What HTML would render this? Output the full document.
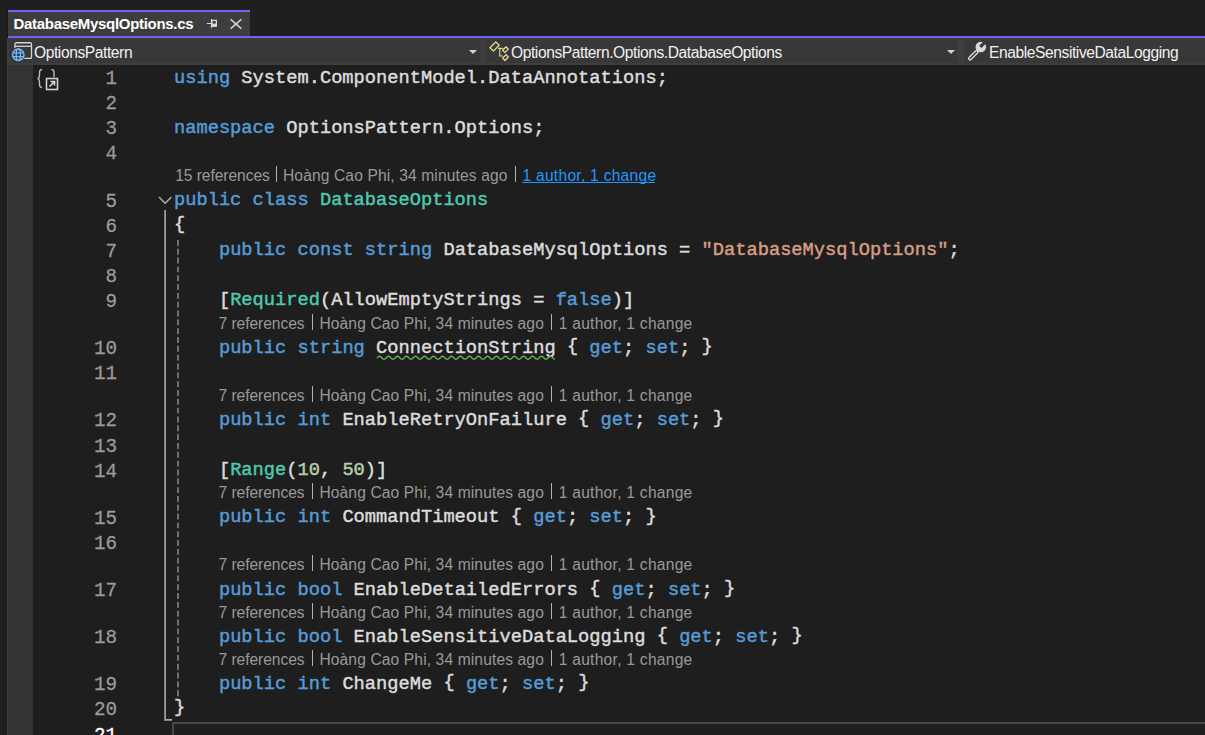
<!DOCTYPE html>
<html><head><meta charset="utf-8"><style>
html,body{margin:0;padding:0;}
body{width:1205px;height:735px;overflow:hidden;background:#1f1f1f;position:relative;font-family:"Liberation Sans",sans-serif;}
.abs{position:absolute;}
#tab{position:absolute;left:8px;top:10px;width:242px;height:26px;background:#3d3d3d;border-top:2px solid #7262e9;box-sizing:border-box;}
#tabtxt{position:absolute;left:13.5px;top:14px;font:bold 15px/20px "Liberation Sans",sans-serif;color:#fff;letter-spacing:-0.3px;white-space:nowrap}
#pl{position:absolute;left:8px;right:0;top:36px;height:2px;background:#7262e9}
#nav{position:absolute;left:7px;right:0;top:38px;height:27px;background:#3e3e3e} #tabedge{position:absolute;left:7px;top:10px;width:1px;height:28px;background:#191919} #gutedge{position:absolute;left:7px;top:65px;width:1px;bottom:0;background:#3d3d3d}
.dd{position:absolute;top:39px;height:24px;background:#383838}
.ddt{position:absolute;top:43px;font:15.6px/20px "Liberation Sans",sans-serif;color:#f0f0f0;white-space:nowrap;letter-spacing:-0.42px}
.arr{position:absolute;top:50px;width:0;height:0;border-left:4px solid transparent;border-right:4px solid transparent;border-top:4px solid #d4d4d4}
#gut{position:absolute;left:8px;top:65px;width:25px;bottom:0;background:#333333}
#ed{position:absolute;left:33px;top:65px;right:0;bottom:0;background:#1e1e1e}
.ln{position:absolute;left:60px;width:57px;text-align:right;font:19.2px/25px "Liberation Mono",monospace;white-space:pre;-webkit-text-stroke:0.25px currentColor;transform-origin:0 5px;transform:scaleY(1.04)}
.code{position:absolute;left:174px;font:18.72px/25px "Liberation Mono",monospace;color:#dcdcdc;white-space:pre;-webkit-text-stroke:0.45px currentColor}
.br{position:relative;top:-1.5px} .k{color:#569cd6} .y{color:#4ec9b0} .s{color:#d69d85} .n{color:#b5cea8}
.q{}
.cl{position:absolute;font:15.6px/20px "Liberation Sans",sans-serif;color:#999;white-space:pre}
.cl{margin-top:-4.68px}
.cl span{position:absolute;top:0} .sep{position:absolute;top:0px;width:1px;height:16px;background:#b2b2b2}
.lk{color:#1e98ff} #ul{position:absolute;left:522px;top:182px;width:133px;height:1px;background:#1e98ff}
#fold{position:absolute;left:165px;top:210px;width:1px;height:510px;background:#a5a5a5}
#foldb{position:absolute;left:165px;top:719px;width:7px;height:1px;background:#a5a5a5}
#guide{position:absolute;left:178px;top:240px;width:1px;height:456px;background:repeating-linear-gradient(to bottom,#777 0,#777 5.5px,transparent 5.5px,transparent 9.5px)}
#cur{position:absolute;left:172px;top:722px;right:-4px;height:40px;border:2px solid #464646;box-sizing:border-box}
</style></head><body>
<div id="tabedge"></div><div id="tab"></div>
<div id="tabtxt">DatabaseMysqlOptions.cs</div>
<svg class="abs" style="left:205px;top:17px" width="14" height="12" viewBox="0 0 14 12">
 <path d="M1.8 6.5H6.3M6.5 1.9V10.8" stroke="#d8d8d8" stroke-width="1.2" fill="none"/>
 <rect x="6.85" y="3.4" width="4.5" height="5.75" fill="none" stroke="#d8d8d8" stroke-width="1.3"/>
 <rect x="6.5" y="6.6" width="5.2" height="3" fill="#d8d8d8"/>
</svg>
<svg class="abs" style="left:229px;top:18px" width="14" height="12" viewBox="0 0 14 12">
 <path d="M1.6 1.4L12.4 10.6M12.4 1.4L1.6 10.6" stroke="#d8d8d8" stroke-width="1.4" fill="none"/>
</svg>
<div id="pl"></div>
<div id="nav"></div>
<div class="dd" style="left:9px;width:471px"></div>
<div class="dd" style="left:486px;width:471px"></div>
<div class="dd" style="left:964px;width:241px"></div>
<svg class="abs" style="left:10px;top:40px" width="24" height="22" viewBox="0 0 24 22">
 <rect x="5" y="2.75" width="16.5" height="15.7" rx="1.2" fill="none" stroke="#d4d4d4" stroke-width="1.3"/>
 <path d="M5 6.3H21.5" stroke="#d4d4d4" stroke-width="1.3"/>
 <circle cx="8.2" cy="14.6" r="7.4" fill="#383838"/>
 <circle cx="8.3" cy="14.7" r="5.7" fill="none" stroke="#74b8ff" stroke-width="1.5"/>
 <ellipse cx="8.3" cy="14.7" rx="2.1" ry="5.7" fill="none" stroke="#74b8ff" stroke-width="1.3"/>
 <path d="M2.8 12.9H13.6M2.8 16.5H13.6" stroke="#74b8ff" stroke-width="1.25"/>
</svg>
<div class="ddt" style="left:34px">OptionsPattern</div>
<div class="arr" style="left:469px"></div>
<svg class="abs" style="left:486px;top:38px" width="26" height="26" viewBox="0 0 26 26">
 <g fill="#423c30" stroke="#f2dc9a" stroke-width="1.25" stroke-linejoin="round">
  <rect x="-4.1" y="-2.4" width="8.2" height="4.8" transform="translate(8.6 8.5) rotate(-45)"/>
  <rect x="-2.45" y="-1.65" width="4.9" height="3.3" transform="translate(19.5 11.7) rotate(-45)"/>
  <rect x="-2.45" y="-1.65" width="4.9" height="3.3" transform="translate(19.5 19.6) rotate(-45)"/>
 </g>
 <path d="M12.2 10.4H16.8M13.8 10.4V18H16.8" stroke="#f2dc9a" stroke-width="1.1" fill="none"/>
</svg>
<div class="ddt" style="left:511px">OptionsPattern.Options.DatabaseOptions</div>
<div class="arr" style="left:947px"></div>
<svg class="abs" style="left:966px;top:40px" width="22" height="22" viewBox="0 0 22 22">
 <path d="M4 18.5L10.5 12" stroke="#d8d8d8" stroke-width="4.2" stroke-linecap="round"/>
 <path d="M4 18.5L10.5 12" stroke="#383838" stroke-width="1.4" stroke-linecap="round"/>
 <circle cx="14.8" cy="7" r="5.3" fill="#d8d8d8"/>
 <path d="M14.3 6.8L18.8 2.3" stroke="#383838" stroke-width="3.2" stroke-linecap="butt"/>
</svg>
<div class="ddt" style="left:989px">EnableSensitiveDataLogging</div>
<div id="gut"></div><div id="gutedge"></div>
<div id="ed"></div>
<svg class="abs" style="left:34px;top:66px" width="28" height="26" viewBox="0 0 28 26">
 <path d="M8 3.5C5.5 3.5 5.5 5 5.5 8.5C5.5 11 5 12.5 3.5 12.5C5 12.5 5.5 14 5.5 16.5C5.5 20 5.5 21.5 8 21.5" stroke="#bdbdbd" stroke-width="1.4" fill="none"/>
 <path d="M17.5 3.5C20 3.5 20 5 20 8.5V11" stroke="#bdbdbd" stroke-width="1.4" fill="none"/>
 <rect x="12.5" y="12.5" width="11" height="11" fill="#1e1e1e" stroke="#cfcfcf" stroke-width="1.6"/>
 <path d="M15.5 20.5L20.5 15.5M16.5 15.5H20.5V19.5" stroke="#dcdcdc" stroke-width="1.6" fill="none"/>
</svg>
<svg class="abs" style="left:158px;top:195px" width="15" height="10" viewBox="0 0 15 10">
 <path d="M1 2L7.2 8.3L13.4 2" stroke="#b0b0b0" stroke-width="1.4" fill="none"/>
</svg>
<svg class="abs" style="left:0;top:0" width="1205" height="735">
 <path d="M165.1 210V719.9H172" fill="none" stroke="#ababab" stroke-width="1.6"/>
 <line x1="178" y1="239.9" x2="178" y2="696.5" stroke="#6f6f6f" stroke-width="2" stroke-dasharray="5.9 2.93"/>
</svg>
<div id="cur"></div>
<div id="ul"></div>
<div class="ln" style="top:67.25px;color:#9b9b9b">1</div>
<div class="code" style="top:65.75px"><span class="k">using</span> System.ComponentModel.DataAnnotations;</div>
<div class="ln" style="top:92.33px;color:#9b9b9b">2</div>
<div class="ln" style="top:117.41px;color:#9b9b9b">3</div>
<div class="code" style="top:115.91px"><span class="k">namespace</span> OptionsPattern.Options;</div>
<div class="ln" style="top:142.49px;color:#9b9b9b">4</div>
<div class="ln" style="top:189.67px;color:#9b9b9b">5</div>
<div class="code" style="top:188.17px"><span class="k">public</span> <span class="k">class</span> <span class="y">DatabaseOptions</span></div>
<div class="cl" style="top:170.72px;left:175.2px"><span style="left:0px;letter-spacing:-0.06px">15 references</span><i class="sep" style="left:100.8px"></i><span style="left:107.8px;letter-spacing:0.12px">Hoàng Cao Phi, 34 minutes ago</span><i class="sep" style="left:339.6px"></i><span style="left:347.3px;letter-spacing:0.26px"><span class="lk">1 author, 1 change</span></span></div>
<div class="ln" style="top:214.75px;color:#9b9b9b">6</div>
<div class="code" style="top:213.25px"><span class="br">{</span></div>
<div class="ln" style="top:239.83px;color:#9b9b9b">7</div>
<div class="code" style="top:238.33px">    <span class="k">public</span> <span class="k">const</span> <span class="k">string</span> DatabaseMysqlOptions = <span class="s">&quot;DatabaseMysqlOptions&quot;</span>;</div>
<div class="ln" style="top:264.91px;color:#9b9b9b">8</div>
<div class="ln" style="top:289.99px;color:#9b9b9b">9</div>
<div class="code" style="top:288.49px">    [<span class="y">Required</span>(AllowEmptyStrings = <span class="k">false</span>)]</div>
<div class="ln" style="top:337.17px;color:#9b9b9b">10</div>
<div class="code" style="top:335.67px">    <span class="k">public</span> <span class="k">string</span> <span class="q">ConnectionString</span> <span class="br">{</span> <span class="k">get</span>; <span class="k">set</span>; <span class="br">}</span></div>
<div class="cl" style="top:318.22px;left:218.6px"><span style="left:0px;letter-spacing:-0.06px">7 references</span><i class="sep" style="left:93.3px"></i><span style="left:100.8px;letter-spacing:0.12px">Hoàng Cao Phi, 34 minutes ago</span><i class="sep" style="left:332.6px"></i><span style="left:340.1px;letter-spacing:0.26px">1 author, 1 change</span></div>
<div class="ln" style="top:362.25px;color:#9b9b9b">11</div>
<div class="ln" style="top:409.43px;color:#9b9b9b">12</div>
<div class="code" style="top:407.93px">    <span class="k">public</span> <span class="k">int</span> EnableRetryOnFailure <span class="br">{</span> <span class="k">get</span>; <span class="k">set</span>; <span class="br">}</span></div>
<div class="cl" style="top:390.48px;left:218.6px"><span style="left:0px;letter-spacing:-0.06px">7 references</span><i class="sep" style="left:93.3px"></i><span style="left:100.8px;letter-spacing:0.12px">Hoàng Cao Phi, 34 minutes ago</span><i class="sep" style="left:332.6px"></i><span style="left:340.1px;letter-spacing:0.26px">1 author, 1 change</span></div>
<div class="ln" style="top:434.51px;color:#9b9b9b">13</div>
<div class="ln" style="top:459.59px;color:#9b9b9b">14</div>
<div class="code" style="top:458.09px">    [<span class="y">Range</span>(<span class="n">10</span>, <span class="n">50</span>)]</div>
<div class="ln" style="top:506.77px;color:#9b9b9b">15</div>
<div class="code" style="top:505.27px">    <span class="k">public</span> <span class="k">int</span> CommandTimeout <span class="br">{</span> <span class="k">get</span>; <span class="k">set</span>; <span class="br">}</span></div>
<div class="cl" style="top:487.82px;left:218.6px"><span style="left:0px;letter-spacing:-0.06px">7 references</span><i class="sep" style="left:93.3px"></i><span style="left:100.8px;letter-spacing:0.12px">Hoàng Cao Phi, 34 minutes ago</span><i class="sep" style="left:332.6px"></i><span style="left:340.1px;letter-spacing:0.26px">1 author, 1 change</span></div>
<div class="ln" style="top:531.85px;color:#9b9b9b">16</div>
<div class="ln" style="top:579.03px;color:#9b9b9b">17</div>
<div class="code" style="top:577.53px">    <span class="k">public</span> <span class="k">bool</span> EnableDetailedErrors <span class="br">{</span> <span class="k">get</span>; <span class="k">set</span>; <span class="br">}</span></div>
<div class="cl" style="top:560.08px;left:218.6px"><span style="left:0px;letter-spacing:-0.06px">7 references</span><i class="sep" style="left:93.3px"></i><span style="left:100.8px;letter-spacing:0.12px">Hoàng Cao Phi, 34 minutes ago</span><i class="sep" style="left:332.6px"></i><span style="left:340.1px;letter-spacing:0.26px">1 author, 1 change</span></div>
<div class="ln" style="top:626.21px;color:#9b9b9b">18</div>
<div class="code" style="top:624.71px">    <span class="k">public</span> <span class="k">bool</span> EnableSensitiveDataLogging <span class="br">{</span> <span class="k">get</span>; <span class="k">set</span>; <span class="br">}</span></div>
<div class="cl" style="top:607.26px;left:218.6px"><span style="left:0px;letter-spacing:-0.06px">7 references</span><i class="sep" style="left:93.3px"></i><span style="left:100.8px;letter-spacing:0.12px">Hoàng Cao Phi, 34 minutes ago</span><i class="sep" style="left:332.6px"></i><span style="left:340.1px;letter-spacing:0.26px">1 author, 1 change</span></div>
<div class="ln" style="top:673.39px;color:#9b9b9b">19</div>
<div class="code" style="top:671.89px">    <span class="k">public</span> <span class="k">int</span> ChangeMe <span class="br">{</span> <span class="k">get</span>; <span class="k">set</span>; <span class="br">}</span></div>
<div class="cl" style="top:654.44px;left:218.6px"><span style="left:0px;letter-spacing:-0.06px">7 references</span><i class="sep" style="left:93.3px"></i><span style="left:100.8px;letter-spacing:0.12px">Hoàng Cao Phi, 34 minutes ago</span><i class="sep" style="left:332.6px"></i><span style="left:340.1px;letter-spacing:0.26px">1 author, 1 change</span></div>
<div class="ln" style="top:698.47px;color:#9b9b9b">20</div>
<div class="code" style="top:696.97px"><span class="br">}</span></div>
<div class="ln" style="top:723.55px;color:#fff">21</div>
<svg class="abs" style="left:0;top:0" width="1205" height="735"><polyline points="377.00,357.96 377.50,357.44 378.00,356.95 378.50,356.55 379.00,356.29 379.50,356.20 380.00,356.29 380.50,356.55 381.00,356.95 381.50,357.44 382.00,357.96 382.50,358.45 383.00,358.85 383.50,359.11 384.00,359.20 384.50,359.11 385.00,358.85 385.50,358.45 386.00,357.96 386.50,357.44 387.00,356.95 387.50,356.55 388.00,356.29 388.50,356.20 389.00,356.29 389.50,356.55 390.00,356.95 390.50,357.44 391.00,357.96 391.50,358.45 392.00,358.85 392.50,359.11 393.00,359.20 393.50,359.11 394.00,358.85 394.50,358.45 395.00,357.96 395.50,357.44 396.00,356.95 396.50,356.55 397.00,356.29 397.50,356.20 398.00,356.29 398.50,356.55 399.00,356.95 399.50,357.44 400.00,357.96 400.50,358.45 401.00,358.85 401.50,359.11 402.00,359.20 402.50,359.11 403.00,358.85 403.50,358.45 404.00,357.96 404.50,357.44 405.00,356.95 405.50,356.55 406.00,356.29 406.50,356.20 407.00,356.29 407.50,356.55 408.00,356.95 408.50,357.44 409.00,357.96 409.50,358.45 410.00,358.85 410.50,359.11 411.00,359.20 411.50,359.11 412.00,358.85 412.50,358.45 413.00,357.96 413.50,357.44 414.00,356.95 414.50,356.55 415.00,356.29 415.50,356.20 416.00,356.29 416.50,356.55 417.00,356.95 417.50,357.44 418.00,357.96 418.50,358.45 419.00,358.85 419.50,359.11 420.00,359.20 420.50,359.11 421.00,358.85 421.50,358.45 422.00,357.96 422.50,357.44 423.00,356.95 423.50,356.55 424.00,356.29 424.50,356.20 425.00,356.29 425.50,356.55 426.00,356.95 426.50,357.44 427.00,357.96 427.50,358.45 428.00,358.85 428.50,359.11 429.00,359.20 429.50,359.11 430.00,358.85 430.50,358.45 431.00,357.96 431.50,357.44 432.00,356.95 432.50,356.55 433.00,356.29 433.50,356.20 434.00,356.29 434.50,356.55 435.00,356.95 435.50,357.44 436.00,357.96 436.50,358.45 437.00,358.85 437.50,359.11 438.00,359.20 438.50,359.11 439.00,358.85 439.50,358.45 440.00,357.96 440.50,357.44 441.00,356.95 441.50,356.55 442.00,356.29 442.50,356.20 443.00,356.29 443.50,356.55 444.00,356.95 444.50,357.44 445.00,357.96 445.50,358.45 446.00,358.85 446.50,359.11 447.00,359.20 447.50,359.11 448.00,358.85 448.50,358.45 449.00,357.96 449.50,357.44 450.00,356.95 450.50,356.55 451.00,356.29 451.50,356.20 452.00,356.29 452.50,356.55 453.00,356.95 453.50,357.44 454.00,357.96 454.50,358.45 455.00,358.85 455.50,359.11 456.00,359.20 456.50,359.11 457.00,358.85 457.50,358.45 458.00,357.96 458.50,357.44 459.00,356.95 459.50,356.55 460.00,356.29 460.50,356.20 461.00,356.29 461.50,356.55 462.00,356.95 462.50,357.44 463.00,357.96 463.50,358.45 464.00,358.85 464.50,359.11 465.00,359.20 465.50,359.11 466.00,358.85 466.50,358.45 467.00,357.96 467.50,357.44 468.00,356.95 468.50,356.55 469.00,356.29 469.50,356.20 470.00,356.29 470.50,356.55 471.00,356.95 471.50,357.44 472.00,357.96 472.50,358.45 473.00,358.85 473.50,359.11 474.00,359.20 474.50,359.11 475.00,358.85 475.50,358.45 476.00,357.96 476.50,357.44 477.00,356.95 477.50,356.55 478.00,356.29 478.50,356.20 479.00,356.29 479.50,356.55 480.00,356.95 480.50,357.44 481.00,357.96 481.50,358.45 482.00,358.85 482.50,359.11 483.00,359.20 483.50,359.11 484.00,358.85 484.50,358.45 485.00,357.96 485.50,357.44 486.00,356.95 486.50,356.55 487.00,356.29 487.50,356.20 488.00,356.29 488.50,356.55 489.00,356.95 489.50,357.44 490.00,357.96 490.50,358.45 491.00,358.85 491.50,359.11 492.00,359.20 492.50,359.11 493.00,358.85 493.50,358.45 494.00,357.96 494.50,357.44 495.00,356.95 495.50,356.55 496.00,356.29 496.50,356.20 497.00,356.29 497.50,356.55 498.00,356.95 498.50,357.44 499.00,357.96 499.50,358.45 500.00,358.85 500.50,359.11 501.00,359.20 501.50,359.11 502.00,358.85 502.50,358.45 503.00,357.96 503.50,357.44 504.00,356.95 504.50,356.55 505.00,356.29 505.50,356.20 506.00,356.29 506.50,356.55 507.00,356.95 507.50,357.44 508.00,357.96 508.50,358.45 509.00,358.85 509.50,359.11 510.00,359.20 510.50,359.11 511.00,358.85 511.50,358.45 512.00,357.96 512.50,357.44 513.00,356.95 513.50,356.55 514.00,356.29 514.50,356.20 515.00,356.29 515.50,356.55 516.00,356.95 516.50,357.44 517.00,357.96 517.50,358.45 518.00,358.85 518.50,359.11 519.00,359.20 519.50,359.11 520.00,358.85 520.50,358.45 521.00,357.96 521.50,357.44 522.00,356.95 522.50,356.55 523.00,356.29 523.50,356.20 524.00,356.29 524.50,356.55 525.00,356.95 525.50,357.44 526.00,357.96 526.50,358.45 527.00,358.85 527.50,359.11 528.00,359.20 528.50,359.11 529.00,358.85 529.50,358.45 530.00,357.96 530.50,357.44 531.00,356.95 531.50,356.55 532.00,356.29 532.50,356.20 533.00,356.29 533.50,356.55 534.00,356.95 534.50,357.44 535.00,357.96 535.50,358.45 536.00,358.85 536.50,359.11 537.00,359.20 537.50,359.11 538.00,358.85 538.50,358.45 539.00,357.96 539.50,357.44 540.00,356.95 540.50,356.55 541.00,356.29 541.50,356.20 542.00,356.29 542.50,356.55 543.00,356.95 543.50,357.44 544.00,357.96 544.50,358.45 545.00,358.85 545.50,359.11 546.00,359.20 546.50,359.11 547.00,358.85 547.50,358.45 548.00,357.96 548.50,357.44 549.00,356.95 549.50,356.55 550.00,356.29 550.50,356.20 551.00,356.29 551.50,356.55 552.00,356.95 552.50,357.44 553.00,357.96 553.50,358.45 554.00,358.85 554.50,359.11 555.00,359.20" fill="none" stroke="#6cb85e" stroke-width="1.3"/></svg>
</body></html>
